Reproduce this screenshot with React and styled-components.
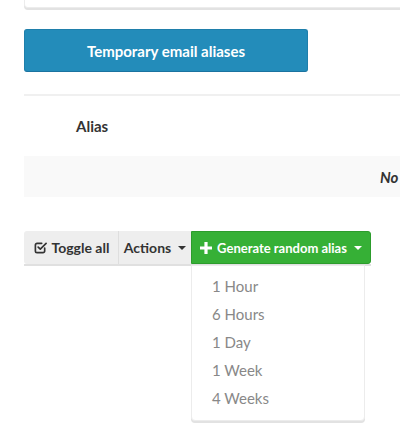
import React from "react";
import styled, { createGlobalStyle } from "styled-components";

const GlobalStyle = createGlobalStyle`
  body {
    margin: 0;
    padding: 0;
    background: #fff;
    font-family: Lato, "Open Sans", sans-serif;
    color: #333;
  }
`;

const Page = styled.div`
  box-sizing: border-box;
  width: 400px;
  min-height: 442px;
  padding-left: 24px;
  overflow-x: clip;
`;

const Wide = styled.div`
  width: 576px;
`;

const Card = styled.div`
  height: 7px;
  background: #fff;
  border: 1px solid #ececec;
  border-top: none;
  border-radius: 0 0 4px 4px;
  box-shadow: 0 2px 0 #e2e2e2;
`;

const PrimaryButton = styled.button`
  display: block;
  margin-top: 21px;
  width: 284px;
  height: 43px;
  background: #238cba;
  border: 1px solid #1f7fab;
  border-bottom-color: #1b73a0;
  border-radius: 3px;
  color: #fff;
  font-family: inherit;
  font-size: 15px;
  font-weight: 700;
  cursor: pointer;
`;

const Rule = styled.hr`
  margin: 22px 0 0;
  border: none;
  border-top: 2px solid #f0f0f0;
`;

const Table = styled.table`
  width: 100%;
  border-collapse: collapse;
`;

const Th = styled.th`
  height: 60px;
  padding: 0 0 0 ${(p) => p.$pad || 0}px;
  text-align: left;
  font-size: 15px;
  font-weight: 700;
  color: #333;
  vertical-align: middle;
`;

const EmptyRow = styled.tr`
  background: #f9f9f9;
`;

const EmptyCell = styled.td`
  height: 41px;
  padding: 0 0 0 356px;
  font-size: 15px;
  font-weight: 700;
  font-style: italic;
  color: #333;
  white-space: nowrap;
`;

const Toolbar = styled.div`
  position: relative;
  margin-top: 34px;
  display: flex;
  width: max-content;
  box-shadow: 0 2px 0 #e0e0e0;
`;

const GroupButton = styled.button`
  display: flex;
  align-items: center;
  gap: 5px;
  height: 33px;
  width: ${(p) => p.$w}px;
  padding: 0;
  justify-content: center;
  font-family: inherit;
  font-size: ${(p) => p.$size || 14}px;
  font-weight: 700;
  cursor: pointer;
  border: none;
  border-left: 1px solid ${(p) => (p.$first ? "transparent" : "#dedede")};
  background: #eee;
  color: #333;
  border-radius: ${(p) => (p.$first ? "3px 0 0 3px" : "0")};
`;

const GreenButton = styled(GroupButton)`
  background: #36b036;
  color: #fff;
  border: 1px solid #2c9c2c;
  border-radius: 0 3px 3px 0;
`;

const Caret = styled.span`
  display: inline-block;
  width: 0;
  height: 0;
  margin-left: 2px;
  border-left: 4px solid transparent;
  border-right: 4px solid transparent;
  border-top: 4px solid currentColor;
`;

const Menu = styled.ul`
  position: absolute;
  top: 34px;
  left: 167px;
  width: 172px;
  margin: 0;
  padding: 6px 0 8px;
  list-style: none;
  background: #fff;
  border: 1px solid #ececec;
  border-radius: 0 0 4px 4px;
  box-shadow: 0 2px 0 #e2e2e2;
  z-index: 2;
`;

const MenuItem = styled.li`
  height: 28px;
  line-height: 28px;
  padding-left: 20px;
  font-size: 15px;
  color: #888;
`;

const CheckIcon = () => (
  <svg width="13" height="13" viewBox="0 0 14 14" fill="none" stroke="#333" strokeWidth="1.8" strokeLinecap="round" strokeLinejoin="round">
    <path d="M11.5 7.5v3.2a1.8 1.8 0 0 1-1.8 1.8H3.3a1.8 1.8 0 0 1-1.8-1.8V4.3a1.8 1.8 0 0 1 1.8-1.8h5" />
    <path d="M4.5 6.5l2.3 2.3L13 2.6" />
  </svg>
);

const PlusIcon = () => (
  <svg width="12" height="12" viewBox="0 0 12 12">
    <path d="M4.4 0h3.2v4.4H12v3.2H7.6V12H4.4V7.6H0V4.4h4.4z" fill="#fff" />
  </svg>
);

const periods = ["1 Hour", "6 Hours", "1 Day", "1 Week", "4 Weeks"];

const App = () => (
  <Page>
    <GlobalStyle />
    <Wide>
      <Card />
      <PrimaryButton>Temporary email aliases</PrimaryButton>
      <Rule />
      <Table>
        <thead>
          <tr>
            <Th $pad={52}>Alias</Th>
          </tr>
        </thead>
        <tbody>
          <EmptyRow>
            <EmptyCell>No aliases found</EmptyCell>
          </EmptyRow>
        </tbody>
      </Table>
    </Wide>
    <Toolbar>
      <GroupButton $w={94} $first>
        <CheckIcon />
        Toggle all
      </GroupButton>
      <GroupButton $w={73}>
        Actions
        <Caret />
      </GroupButton>
      <GreenButton $w={180} $size={13}>
        <PlusIcon />
        Generate random alias
        <Caret />
      </GreenButton>
      <Menu>
        {periods.map((p) => (
          <MenuItem key={p}>{p}</MenuItem>
        ))}
      </Menu>
    </Toolbar>
  </Page>
);

export default App;
